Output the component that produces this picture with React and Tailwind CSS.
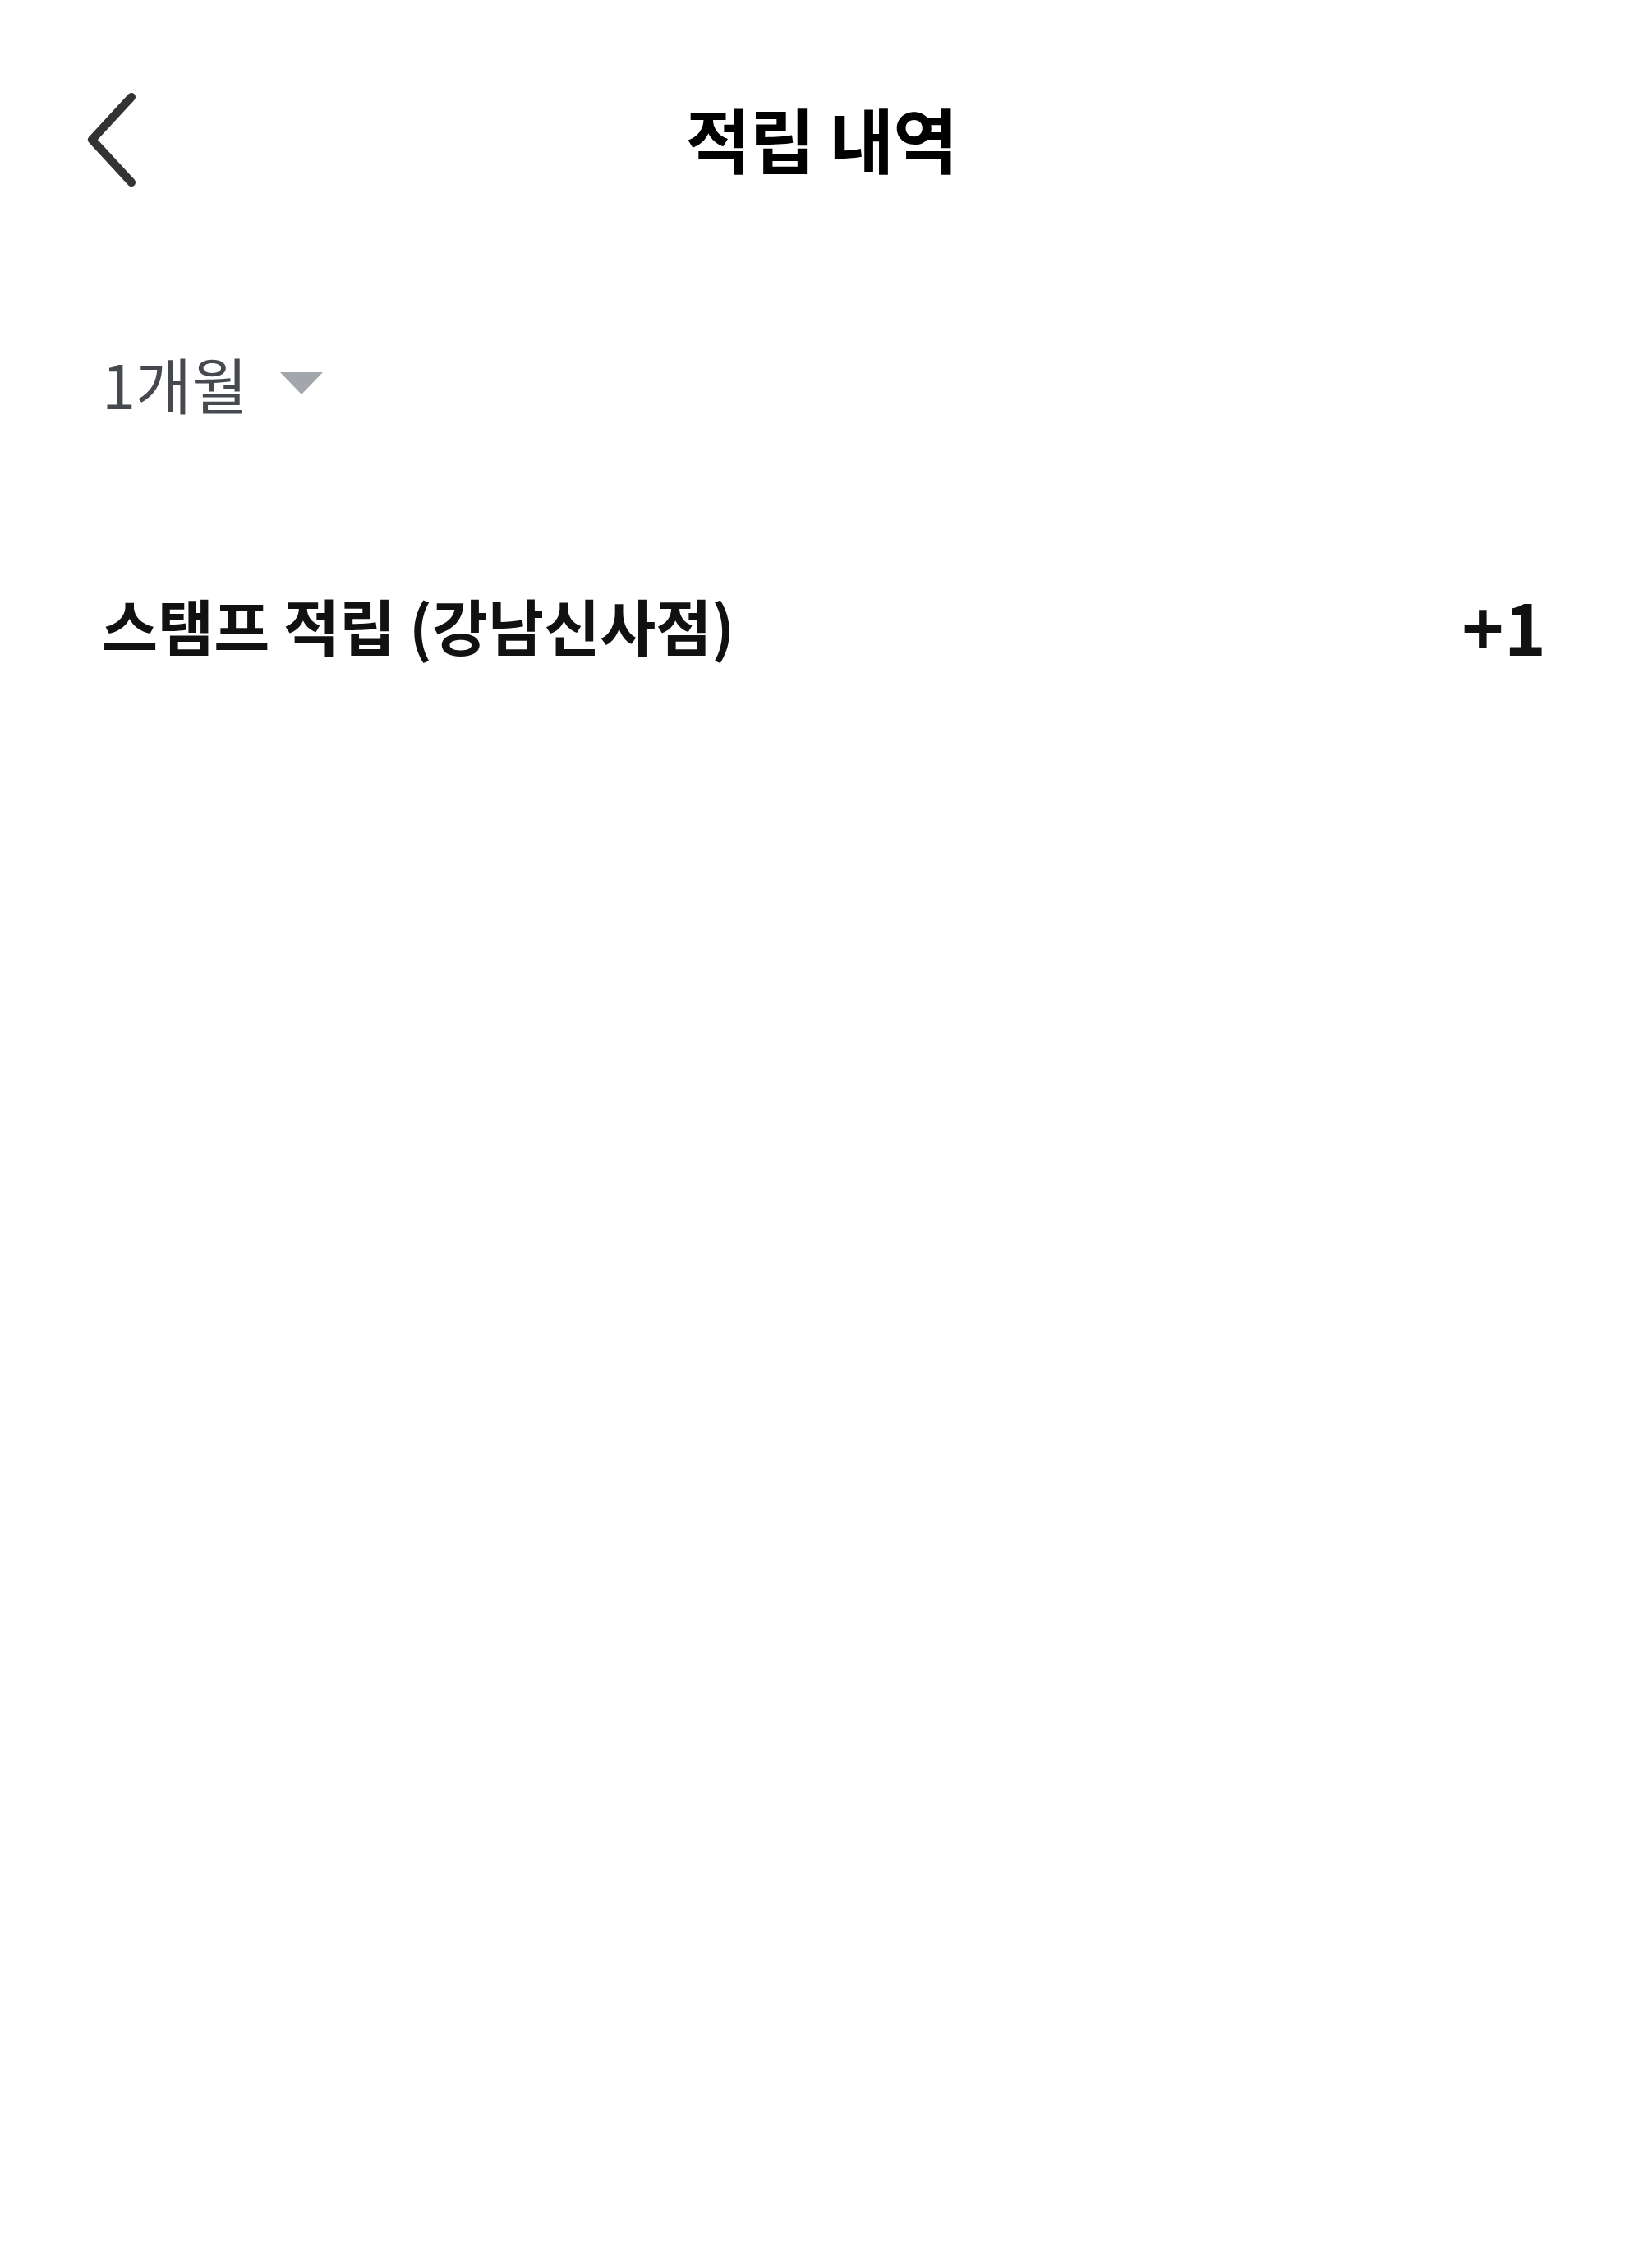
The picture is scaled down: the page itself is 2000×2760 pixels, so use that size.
import React from 'react';

function BackIcon() {
  return (
    <svg width="70" height="120" viewBox="0 0 70 120" fill="none">
      <path d="M58 10 L10 62 L58 114" stroke="#333333" strokeWidth="10" strokeLinecap="round" strokeLinejoin="round" />
    </svg>
  );
}

export default function App() {
  return (
    <div className="w-[2000px] min-h-[2760px] bg-white font-['Noto_Sans_CJK_KR',sans-serif]">
      <header className="grid grid-cols-[1fr_auto_1fr] items-center h-[336px]">
        <div className="pl-[102px] flex items-center">
          <button className="flex items-center"><BackIcon /></button>
        </div>
        <h1 className="text-[86px] font-bold text-black leading-none tracking-[-1px]">적립 내역</h1>
        <div />
      </header>

      <div className="pl-[124px] pr-[118px]">
        <button className="flex items-center gap-[40px] h-[260px]">
          <span className="text-[74px] text-[#46494e] leading-none">1개월</span>
          <svg width="52" height="27" viewBox="0 0 52 27">
            <path d="M0 0 H52 L26 27 Z" fill="#a3a6ab" />
          </svg>
        </button>

        <ul>
          <li className="flex items-center justify-between h-[328px]">
            <span className="text-[74px] font-bold text-[#111111] leading-none">스탬프 적립 (강남신사점)</span>
            <span className="text-[87px] font-bold text-[#111111] leading-none">+1</span>
          </li>
        </ul>
      </div>
    </div>
  );
}
